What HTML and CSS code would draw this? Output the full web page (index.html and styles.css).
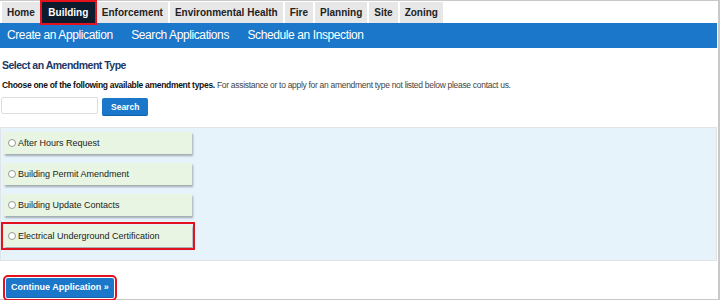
FILE: index.html
```html
<!DOCTYPE html>
<html lang="en">
<head>
  <meta charset="UTF-8">
  <title>Select an Amendment Type</title>
  <link rel="stylesheet" href="styles.css">
</head>
<body>
  <div class="page">
    <nav class="tabs">
      <a class="tab" href="#">Home</a>
      <a class="tab active highlight" href="#">Building</a>
      <a class="tab" href="#">Enforcement</a>
      <a class="tab" href="#">Environmental Health</a>
      <a class="tab" href="#">Fire</a>
      <a class="tab" href="#">Planning</a>
      <a class="tab" href="#">Site</a>
      <a class="tab" href="#">Zoning</a>
    </nav>

    <nav class="subnav">
      <a href="#">Create an Application</a>
      <a href="#">Search Applications</a>
      <a href="#">Schedule an Inspection</a>
    </nav>

    <main class="content">
      <h2 class="section-title">Select an Amendment Type</h2>
      <p class="intro"><strong>Choose one of the following available amendment types.</strong> For assistance or to apply for an amendment type not listed below please contact us.</p>

      <form class="search-row" onsubmit="return false">
        <input class="search-input" type="text">
        <button class="btn btn-search" type="submit">Search</button>
      </form>

      <div class="type-list">
        <label class="type-option"><span class="radio"></span>After Hours Request</label>
        <label class="type-option"><span class="radio"></span>Building Permit Amendment</label>
        <label class="type-option"><span class="radio"></span>Building Update Contacts</label>
        <label class="type-option highlight"><span class="radio"></span>Electrical Underground Certification</label>
      </div>

      <div class="actions">
        <button class="btn btn-continue highlight" type="button">Continue Application &raquo;</button>
      </div>
    </main>
  </div>
</body>
</html>
```

FILE: styles.css
```css
body {
  margin: 0;
  font-family: "Liberation Sans", Arial, sans-serif;
  background: #fff;
}

.page {
  width: 720px;
  height: 300px;
  box-sizing: border-box;
  border-top: 1px solid #c9c9c9;
  border-right: 2px solid #c9c9c9;
  border-bottom: 1px solid #c9c9c9;
}

/* top tabs */
.tabs {
  display: flex;
  gap: 2px;
  padding: 1px 0 0 2px;
}

.tab {
  height: 21px;
  line-height: 21px;
  padding: 0 5px;
  background: #e7e7e7;
  color: #222;
  font-size: 10px;
  font-weight: bold;
  text-decoration: none;
}

.tab.active {
  position: relative;
  z-index: 1;
  padding: 0 6.5px;
  background: #0e1b2c;
  color: #fff;
}

/* blue sub navigation */
.subnav {
  display: flex;
  height: 25px;
  margin-right: 1px;
  padding-left: 7px;
  background: #1a77c9;
}

.subnav a {
  margin-right: 18.5px;
  color: #fff;
  font-size: 12px;
  letter-spacing: -0.4px;
  line-height: 25px;
  text-decoration: none;
}

/* content */
.section-title {
  margin: 9px 0 0 2px;
  color: #1c3766;
  font-size: 10.5px;
  letter-spacing: -0.5px;
  line-height: 16px;
  font-weight: bold;
}

.intro {
  margin: 6px 0 0 2px;
  color: #444;
  font-size: 8.5px;
  letter-spacing: -0.3px;
  line-height: 12px;
}

.intro strong {
  color: #111;
}

.search-row {
  display: flex;
  align-items: flex-start;
  gap: 4px;
  margin: 6px 0 0 1px;
}

.search-input {
  width: 97px;
  height: 17px;
  box-sizing: border-box;
  padding: 0 3px;
  border: 1px solid #ddd;
  border-radius: 2px;
}

.btn {
  background: #1a77c9;
  color: #fff;
  font-family: inherit;
  font-weight: bold;
  border: 0;
  border-bottom: 1px solid #1461a8;
  border-radius: 2px;
  cursor: pointer;
}

.btn-search {
  height: 18px;
  margin-top: 1px;
  padding: 0 9px;
  font-size: 8.5px;
}

.type-list {
  display: flex;
  flex-direction: column;
  gap: 9px;
  margin: 11px 1px 0 0;
  padding: 4px 3px 13px;
  background: #e6f3fb;
  border: 1px solid #e0e4e6;
}

.type-option {
  display: flex;
  align-items: center;
  width: 188px;
  height: 22px;
  box-sizing: border-box;
  padding-left: 4px;
  background: #e8f5e3;
  box-shadow: 1px 2px 2px rgba(0, 0, 0, 0.3);
  color: #222;
  font-size: 9px;
}

.radio {
  width: 8px;
  height: 8px;
  box-sizing: border-box;
  margin-right: 2px;
  border: 1px solid #999;
  border-radius: 50%;
  background: #fff;
}

.actions {
  margin-top: 15px;
  padding-left: 6px;
}

.btn-continue {
  height: 20px;
  padding: 0 5px;
  font-size: 9px;
}

.highlight {
  outline: 2px solid #e2131f;
  outline-offset: 1.5px;
}

.tab.highlight {
  outline-offset: 0;
}
```
